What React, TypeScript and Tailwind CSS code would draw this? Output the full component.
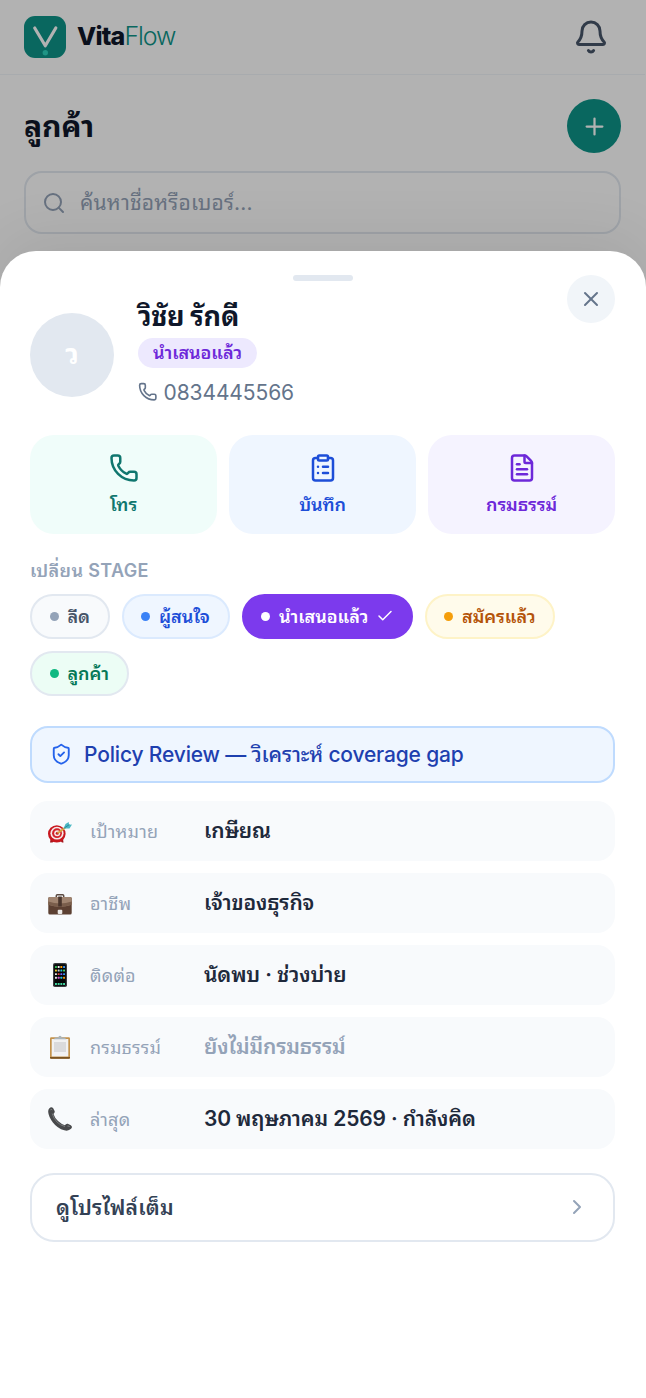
import {
  Bell,
  Check,
  ChevronRight,
  ClipboardList,
  FileText,
  Phone,
  Plus,
  Search,
  ShieldCheck,
  X,
} from "lucide-react";
import clsx from "clsx";

const ACTIONS = [
  { label: "โทร", icon: Phone, style: "bg-[#f0fdfa] text-[#0f766e]" },
  { label: "บันทึก", icon: ClipboardList, style: "bg-[#eff6ff] text-[#1d4ed8]" },
  { label: "กรมธรรม์", icon: FileText, style: "bg-[#f5f3ff] text-[#6d28d9]" },
];

const STAGES = [
  { label: "ลีด", style: "w-[79.5px] bg-[#f8fafc] border-[#e2e8f0] text-[#475569]", dot: "bg-[#94a3b8]" },
  { label: "ผู้สนใจ", style: "w-[108px] bg-[#eff6ff] border-[#dbeafe] text-[#1d4ed8]", dot: "bg-[#3b82f6]" },
  { label: "นำเสนอแล้ว", style: "w-[171px] bg-[#7c3aed] border-[#7c3aed] text-white", dot: "bg-white", active: true },
  { label: "สมัครแล้ว", style: "w-[130.5px] bg-[#fffbeb] border-[#fef3c7] text-[#b45309]", dot: "bg-[#f59e0b]" },
  { label: "ลูกค้า", style: "w-[99px] bg-[#ecfdf5] border-[#e2e8f0] text-[#047857]", dot: "bg-[#10b981]" },
];

function TargetIcon() {
  return (
    <svg width="24" height="24" viewBox="0 0 24 24">
      <path d="M2.500 20.500 2 23.500h2.500l2-2M12 21.500l2 2h1.500L15 20" fill="#a3161c" />
      <ellipse cx="8.800" cy="14.800" rx="8.800" ry="8.600" fill="#c8171e" />
      <ellipse cx="9" cy="14.200" rx="6.600" ry="6.400" fill="#f5e9e9" />
      <circle cx="9" cy="14.200" r="4.900" fill="#d3222a" />
      <circle cx="9.200" cy="14.200" r="3" fill="#f5e9e9" />
      <circle cx="9.300" cy="14.200" r="1.500" fill="#c8171e" />
      <path d="M9.500 14.200 17.500 8.500" stroke="#d9a441" strokeWidth="1.800" />
      <path d="M15.500 9.500 17.500 5l3.200-2 .3 2.800L24 5.500l-2.500 4z" fill="#4bb8c4" />
      <path d="M16.500 8.800 21.500 5.500" stroke="#23808e" strokeWidth="0.800" />
    </svg>
  );
}

function BriefcaseIcon() {
  return (
    <svg width="24" height="24" viewBox="0 0 24 24">
      <g transform="translate(0 1.500)">
        <path d="M8.300 5V3.300q0-1 1-1h5.400q1 0 1 1V5" fill="none" stroke="#5b4a42" strokeWidth="1.500" />
        <rect x="0.300" y="4.500" width="23.400" height="17.500" rx="1.500" fill="#5c4032" />
        <path d="M1.500 4.500h21q1.200 0 1.200 1.300v6.400q-6 2-11.700 2t-11.700-2V5.800q0-1.300 1.200-1.300z" fill="#a08470" />
        <path d="M.3 9v3.200q6 2 11.700 2t11.700-2V9q-6 2-11.700 2T.3 9z" fill="#7a5e4c" />
        <rect x="10.200" y="4" width="3.600" height="10" fill="#49352c" />
        <rect x="9.700" y="17.200" width="4.600" height="4.300" rx="1" fill="#ece9e6" />
      </g>
    </svg>
  );
}

function MobileIcon() {
  const colors = ["#35c759", "#f2f2f2", "#ff9f0a", "#3b9cff", "#f3c623", "#c9cdd2", "#27c4d8", "#4cd964", "#f2f2f2", "#e8453c", "#7d5fff", "#3b9cff", "#f2f2f2", "#d25bd6", "#27c4d8", "#ff9f0a"];
  return (
    <svg width="24" height="24" viewBox="0 0 24 24">
      <rect x="5" y="0" width="14" height="24" rx="1.800" fill="#3b3d40" />
      <rect x="6.200" y="1.200" width="11.600" height="21.600" rx="1" fill="#050607" />
      {colors.map((c, i) => (
        <rect key={i} x={7 + (i % 4) * 2.7} y={3 + Math.floor(i / 4) * 3.6} width="1.900" height="1.900" rx="0.500" fill={c} />
      ))}
      <path d="M7 21h10.200" stroke="#43d6a0" strokeWidth="1.800" strokeDasharray="1.900 .8" />
    </svg>
  );
}

function ClipboardIcon() {
  return (
    <svg width="24" height="24" viewBox="0 0 24 24">
      <rect x="2" y="2.200" width="20" height="21.500" rx="1.200" fill="#c3924c" />
      <path d="M2 22h20v.8q0 .9-1 .9H3q-1 0-1-.9z" fill="#7a5323" />
      <rect x="3.700" y="4" width="16.600" height="17.500" fill="#f1f1f2" />
      <rect x="6" y="7" width="12" height="10" fill="#dadadc" />
      <path d="M5.500 4.300 7.500 2.500h2.800Q10.500.8 12 .8t1.700 1.700h2.800l2 1.800z" fill="#aab4ba" />
    </svg>
  );
}

function ReceiverIcon() {
  return (
    <svg width="24" height="24" viewBox="0 0 24 24">
      <path
        d="M1.200 1.500Q3.300-.6 5.200 1.200L6.600 4Q7.200 5.600 5.500 7q1.200 4 4.500 7t6.800 4.300q1.400-2 3-1.500l3 1.400q2.200 1.600.3 3.600-2.700 2.600-6.800 1.500Q9.500 21.500 4.900 15.500.5 9.500.2 5 .1 2.700 1.200 1.500z"
        fill="#48494b"
      />
      <path d="M4.200 6.500Q5.500 11.500 9 15t8 4.500" fill="none" stroke="#77797b" strokeWidth="1" />
      <path d="M2.500 2.800q1-.8 1.700.2M19.500 19q1.500-.3 2 .8" fill="none" stroke="#8b8d90" strokeWidth="1" />
    </svg>
  );
}

const DETAILS = [
  { icon: TargetIcon, label: "เป้าหมาย", value: "เกษียณ" },
  { icon: BriefcaseIcon, label: "อาชีพ", value: "เจ้าของธุรกิจ" },
  { icon: MobileIcon, label: "ติดต่อ", value: "นัดพบ · ช่วงบ่าย" },
  { icon: ClipboardIcon, label: "กรมธรรม์", value: "ยังไม่มีกรมธรรม์", muted: true },
  { icon: ReceiverIcon, label: "ล่าสุด", value: "30 พฤษภาคม 2569 · กำลังคิด" },
];

function Logo() {
  return (
    <svg width="42" height="42" viewBox="0 0 42 42">
      <rect width="42" height="42" rx="11" fill="#0d9488" />
      <path d="M10.700 12 21.300 29.800 31.800 12" fill="none" stroke="#fff" strokeWidth="3.200" strokeLinecap="round" strokeLinejoin="round" />
      <circle cx="21.300" cy="36.800" r="2.700" fill="#2dd4bf" />
    </svg>
  );
}

function CustomersPage() {
  return (
    <div className="w-[645px]">
      <header className="flex h-[75px] items-center justify-between border-b-[1.5px] border-[#f1f5f9] pr-9 pb-px pl-6">
        <div className="flex items-center gap-[11px]">
          <Logo />
          <div className="text-[25px] leading-none">
            <span className="font-extrabold tracking-[-0.8px] text-[#0f172a]">Vita</span>
            <span className="font-light tracking-[-1.1px] text-[#0d9488]">Flow</span>
          </div>
        </div>
        <Bell size={36} strokeWidth={2} className="text-[#475569]" />
      </header>
      <div className="flex items-center justify-between px-6 pt-6">
        <h1 className="text-[30px] leading-[54px] font-bold tracking-[-0.2px] text-[#0f172a]">ลูกค้า</h1>
        <button className="flex size-[54px] items-center justify-center rounded-full bg-[#0d9488] text-white">
          <Plus size={27} />
        </button>
      </div>
      <div className="mx-6 mt-[18px] flex h-[63px] items-center gap-[14px] rounded-[18px] border-2 border-[#e2e8f0] px-4 text-[#94a3b8]">
        <Search size={24} />
        <span className="text-[21px] tracking-[0.2px]">ค้นหาชื่อหรือเบอร์...</span>
      </div>
    </div>
  );
}

function CustomerSheet() {
  return (
    <section className="absolute top-[250.5px] bottom-0 left-0 w-[646px] rounded-t-[36px] bg-white pr-[31px] pl-[30px] shadow-[0_-12px_60px_rgba(0,0,0,0.08)]">
      <div className="flex justify-center pt-6">
        <div className="h-1.5 w-[60px] rounded-full bg-[#e2e8f0]" />
      </div>
      <button className="absolute top-6 right-[31px] flex size-12 items-center justify-center rounded-full bg-[#f1f5f9] text-[#64748b]">
        <X size={24} />
      </button>

      <div className="mt-[18.5px] flex h-[112px] items-center gap-6">
        <div className="flex size-[84px] items-center justify-center rounded-full bg-[#e2e8f0] text-[27px] font-bold text-white">
          ว
        </div>
        <div className="-mt-[3px] flex flex-col items-start">
          <h2 className="h-[38px] text-[27px] leading-[34px] font-bold tracking-[-0.25px] whitespace-nowrap text-[#0f172a]">วิชัย รักดี</h2>
          <span className="flex h-[30px] w-[119px] items-center justify-center rounded-full bg-[#ede9fe] text-[18px] font-semibold tracking-[-0.1px] whitespace-nowrap text-[#6d28d9]">
            นำเสนอแล้ว
          </span>
          <div className="mt-[9px] flex items-center gap-1.5 text-[21px] leading-[30px] tracking-[-0.1px] text-[#64748b]">
            <Phone size={19.5} />
            <span className="pt-px">0834445566</span>
          </div>
        </div>
      </div>

      <div className="mt-6 grid grid-cols-3 gap-3">
        {ACTIONS.map(({ label, icon: Icon, style }) => (
          <button key={label} className={clsx("flex h-[98.5px] flex-col items-center rounded-3xl pt-[18px]", style)}>
            <Icon size={30} />
            <span className="mt-[7.500px] text-[18px] leading-[28px] font-semibold tracking-[-0.1px]">{label}</span>
          </button>
        ))}
      </div>

      <div className="mt-[23px] text-[18px] leading-[27px] font-semibold tracking-[0.35px] text-[#94a3b8]">เปลี่ยน STAGE</div>
      <div className="mt-[10px] flex flex-wrap gap-3">
        {STAGES.map(({ label, style, dot, active }) => (
          <button
            key={label}
            className={clsx(
              "flex h-[45px] items-center gap-[9px] rounded-full border-2 pl-[17.500px] text-[18px] font-semibold tracking-[-0.05px] whitespace-nowrap",
              style,
            )}
          >
            <span className={clsx("size-[9px] shrink-0 rounded-full", dot)} />
            {label}
            {active && <Check size={18} className="-ml-px shrink-0" />}
          </button>
        ))}
      </div>

      <button className="mt-[30px] flex h-[57px] w-full items-center gap-3 rounded-[18px] border-2 border-[#bfdbfe] bg-[#eff6ff] px-[17.500px] text-[21px] font-medium whitespace-nowrap text-[#1e40af]">
        <ShieldCheck size={22.5} className="text-[#2563eb]" />
        <span className="pt-px tracking-[-0.17px]">Policy Review — วิเคราะห์ coverage gap</span>
      </button>

      <div className="mt-[18px] flex flex-col gap-3">
        {DETAILS.map(({ icon: Icon, label, value, muted }) => (
          <div key={label} className="flex h-[60px] items-center rounded-[18px] bg-[#f8fafc] px-[18px] whitespace-nowrap">
            <Icon />
            <span className="ml-[18px] w-[114px] pt-px text-[18px] tracking-[0.2px] text-[#94a3b8]">{label}</span>
            <span
              className={clsx(
                "pt-px text-[21px] font-semibold tracking-[-0.13px]",
                muted ? "text-[#94a3b8]" : "text-[#1e293b]",
              )}
            >
              {value}
            </span>
          </div>
        ))}
      </div>

      <button className="mt-6 flex h-[69px] w-full items-center justify-between rounded-3xl border-2 border-[#e2e8f0] px-6 text-[21px] font-semibold tracking-[0.22px] text-[#334155]">
        <span className="pt-px">ดูโปรไฟล์เต็ม</span>
        <ChevronRight size={24} className="text-[#94a3b8]" />
      </button>
    </section>
  );
}

function App() {
  return (
    <div className="relative h-[1398px] w-full overflow-hidden bg-white font-['Inter','Noto_Sans_Thai_Looped','Noto_Looped_Thai','Loma','Garuda','Noto_Sans_Thai','Noto_Sans',sans-serif]">
      <CustomersPage />
      <div className="absolute inset-0 bg-black/30" />
      <CustomerSheet />
    </div>
  );
}

export default App;
